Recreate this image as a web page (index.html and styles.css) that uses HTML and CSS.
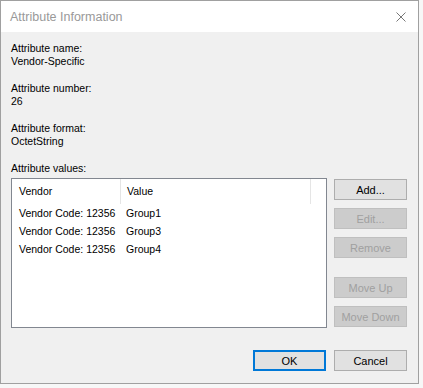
FILE: index.html
```html
<!DOCTYPE html>
<html>
<head>
    <title>Attribute Information</title>
    <link rel="stylesheet" href="styles.css">
</head>
<body>
    <div class="dialog">
        <div class="titlebar">
            <span class="title">Attribute Information</span>
            <svg class="close" width="10" height="10" viewBox="0 0 10 10">
                <path d="M0.5 0.5 L9.5 9.5 M9.5 0.5 L0.5 9.5" stroke="#777" stroke-width="1" fill="none"/>
            </svg>
        </div>
        <div class="content">
            <div class="field">
                <div>Attribute name:</div>
                <div>Vendor-Specific</div>
            </div>
            <div class="field">
                <div>Attribute number:</div>
                <div>26</div>
            </div>
            <div class="field">
                <div>Attribute format:</div>
                <div>OctetString</div>
            </div>
            <div class="values-label">Attribute values:</div>
            <div class="values">
                <div class="listbox">
                    <div class="list-header">
                        <div class="col-vendor">Vendor</div>
                        <div class="col-value">Value</div>
                    </div>
                    <div class="list-row">
                        <div class="col-vendor">Vendor Code: 12356</div>
                        <div class="col-value">Group1</div>
                    </div>
                    <div class="list-row">
                        <div class="col-vendor">Vendor Code: 12356</div>
                        <div class="col-value">Group3</div>
                    </div>
                    <div class="list-row">
                        <div class="col-vendor">Vendor Code: 12356</div>
                        <div class="col-value">Group4</div>
                    </div>
                </div>
                <div class="side-buttons">
                    <button class="btn">Add...</button>
                    <button class="btn" disabled>Edit...</button>
                    <button class="btn" disabled>Remove</button>
                    <button class="btn spaced" disabled>Move Up</button>
                    <button class="btn" disabled>Move Down</button>
                </div>
            </div>
            <div class="footer">
                <button class="btn default">OK</button>
                <button class="btn">Cancel</button>
            </div>
        </div>
    </div>
</body>
</html>
```

FILE: styles.css
```css
body {
    margin: 0;
    background-color: #f7f7f7;
    font-family: "Liberation Sans", Arial, sans-serif;
    font-size: 10.5px;
    color: #000;
}

.dialog {
    width: 419px;
    height: 384px;
    box-sizing: border-box;
    border: 1px solid #a0a0a0;
    background-color: #f0f0f0;
    display: flex;
    flex-direction: column;
}

.titlebar {
    height: 31px;
    background-color: #fff;
    display: flex;
    align-items: center;
    justify-content: space-between;
    padding: 0 12px 0 9px;
}

.title {
    font-size: 12.5px;
    color: #999;
}

.content {
    flex: 1;
    padding: 10px 11px 0 10px;
    display: flex;
    flex-direction: column;
}

.field {
    line-height: 13px;
    margin-bottom: 14px;
}

.values-label {
    line-height: 13px;
    margin-bottom: 3px;
}

.values {
    display: flex;
    gap: 7px;
}

.listbox {
    width: 317px;
    height: 150px;
    box-sizing: border-box;
    border: 1px solid #828790;
    background-color: #fff;
}

.list-header {
    display: flex;
    height: 25px;
    align-items: center;
}

.list-header .col-vendor,
.list-header .col-value {
    height: 25px;
    line-height: 25px;
    border-right: 1px solid #e5e5e5;
}

.list-row {
    display: flex;
    height: 18px;
    line-height: 18px;
}

.col-vendor {
    width: 101px;
    padding-left: 7px;
}

.col-value {
    width: 183px;
    padding-left: 6px;
}

.side-buttons {
    display: flex;
    flex-direction: column;
    gap: 8px;
    padding-top: 1px;
}

.btn {
    width: 73px;
    height: 21px;
    box-sizing: border-box;
    background-color: #e1e1e1;
    border: 1px solid #adadad;
    font-family: "Liberation Sans", Arial, sans-serif;
    font-size: 11px;
    color: #000;
    padding: 0;
}

.btn:disabled {
    background-color: #cccccc;
    border-color: #bfbfbf;
    color: #a0a0a0;
}

.btn.spaced {
    margin-top: 11px;
}

.btn.default {
    border: 2px solid #0078d7;
}

.footer {
    display: flex;
    justify-content: flex-end;
    gap: 8px;
    margin-top: 22px;
}
```
